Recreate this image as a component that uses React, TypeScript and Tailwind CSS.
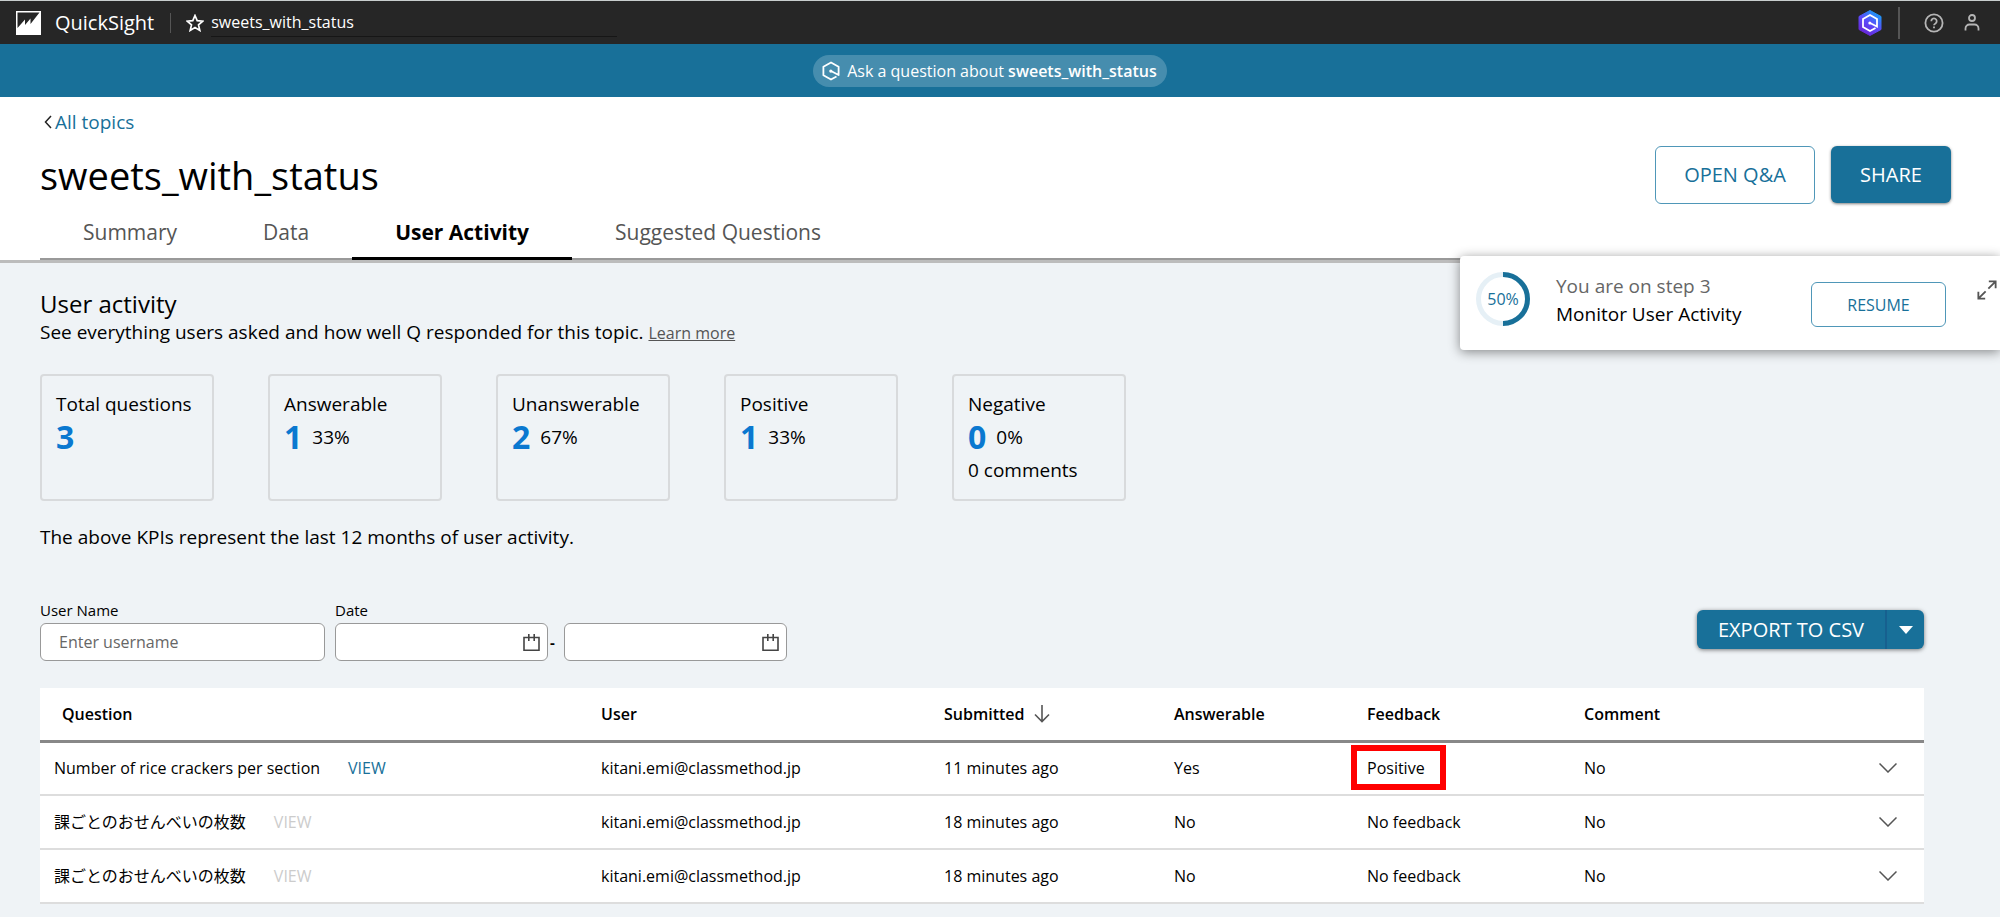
import React, { useState } from 'react';

const tabs = ['Summary', 'Data', 'User Activity', 'Suggested Questions'];

const kpis = [
  { label: 'Total questions', value: 3 },
  { label: 'Answerable', value: 1, percent: '33%' },
  { label: 'Unanswerable', value: 2, percent: '67%' },
  { label: 'Positive', value: 1, percent: '33%' },
  { label: 'Negative', value: 0, percent: '0%', note: '0 comments' },
];

const rows = [
  { question: 'Number of rice crackers per section', viewable: true, submitted: '11 minutes ago', answerable: 'Yes', feedback: 'Positive' },
  { question: '課ごとのおせんべいの枚数', viewable: false, submitted: '18 minutes ago', answerable: 'No', feedback: 'No feedback' },
  { question: '課ごとのおせんべいの枚数', viewable: false, submitted: '18 minutes ago', answerable: 'No', feedback: 'No feedback' },
];

const QMark = ({ className }: { className?: string }) => (
  <svg viewBox="0 0 20 20" className={className} fill="none" stroke="currentColor" strokeWidth="1.8">
    <path d="M10 10l7.6 4V5.8L10 1.5 2.4 5.8v8.4L10 18.5l5.5-3" strokeLinejoin="round" />
    <circle cx="9.8" cy="10.1" r="1.6" fill="currentColor" stroke="none" />
  </svg>
);

const CalendarIcon = () => (
  <svg viewBox="0 0 17 17" className="h-[17px] w-[17px] shrink-0" fill="none" stroke="#444" strokeWidth="1.6">
    <path d="M1 3.5h15v12.7H1z" />
    <path d="M5.8 0v7M11.2 0v7" />
  </svg>
);

const TopBar = () => (
  <header className="flex h-11 items-center border-t border-[#c8cdcd] bg-[#262626] pl-4 pr-5 text-white">
    <svg viewBox="0 0 25 24" className="h-6 w-[25px]">
      <path d="M0 0h25v24H0z" fill="#fff" />
      <path d="M1.5 1.5h22L14.5 13V7.5L9 14V8.5L1.5 17z" fill="#262626" />
    </svg>
    <span className="ml-3.5 text-xl">QuickSight</span>
    <span className="ml-4 h-5 w-px bg-[#555]" />
    <svg viewBox="0 0 18 18" className="ml-[15px] h-[18px] w-[18px]" fill="none" stroke="#fff" strokeWidth="1.7">
      <path d="M9 1.5l2.2 5.2 5.500.5-4.200 3.700 1.300 5.500L9 13.500l-4.800 2.900 1.300-5.500L1.300 7.200l5.500-.5z" />
    </svg>
    <span className="ml-[7px] w-[406px] border-b border-[#161616] text-base leading-7">sweets_with_status</span>
    <div className="ml-auto flex items-center">
      <button aria-label="Ask Q">
        <svg viewBox="0 0 24 26" className="h-[26px] w-6">
          <defs>
            <linearGradient id="q" x1="0.2" y1="1" x2="0.8" y2="0">
              <stop offset="0" stopColor="#6a1fd0" />
              <stop offset="0.5" stopColor="#5b4bfa" />
              <stop offset="1" stopColor="#12a5f5" />
            </linearGradient>
          </defs>
          <path d="M12 0.5l11 6v13l-11 6-11-6v-13z" fill="url(#q)" stroke="url(#q)" strokeLinejoin="round" />
          <path d="M12 13l7 3.5V9l-7-4-7 4v8l7 4 5.500-3" fill="none" stroke="#fff" strokeWidth="1.8" />
          <circle cx="11.8" cy="13" r="1.5" fill="#fff" />
        </svg>
      </button>
      <span className="ml-4 h-8 w-0.5 bg-[#555]" />
      <button aria-label="Help" className="ml-6">
        <svg viewBox="0 0 20 20" className="h-5 w-5" fill="none" stroke="#b5b5b5" strokeWidth="1.8">
          <circle cx="10" cy="10" r="8.6" />
          <path d="M7.3 8.200a2.700 2.700 0 1 1 4.200 2.200c-1 .6-1.500 1-1.500 1.900M10 13.500v1.700" />
        </svg>
      </button>
      <button aria-label="Account" className="ml-5">
        <svg viewBox="0 0 16 17" className="h-[17px] w-4" fill="none" stroke="#b5b5b5" strokeWidth="1.8">
          <circle cx="8" cy="4" r="3" />
          <path d="M1.500 16.500v-2a4 4 0 0 1 4-4h5a4 4 0 0 1 4 4v2" />
        </svg>
      </button>
    </div>
  </header>
);

const StepPanel = () => (
  <aside className="absolute right-0 top-64 z-10 flex h-[94px] w-[540px] items-start rounded-l bg-white pl-4 shadow-[0_2px_12px_rgba(0,0,0,0.45)]">
    <div className="relative mt-4 flex h-[54px] w-[54px] items-center justify-center">
      <svg viewBox="0 0 54 54" className="absolute inset-0" fill="none" strokeWidth="5">
        <circle cx="27" cy="27" r="24.5" stroke="#e6f0f6" />
        <path d="M27 2.500a24.500 24.500 0 0 1 0 49" stroke="#187099" />
      </svg>
      <span className="text-base text-[#187099]">50%</span>
    </div>
    <div className="ml-[26px] mt-4 text-[19px] leading-7">
      <p className="text-[#666]">You are on step 3</p>
      <p className="text-black">Monitor User Activity</p>
    </div>
    <button className="ml-auto mt-[26px] h-[45px] w-[135px] rounded-md border border-[#4f97b8] text-base text-[#187099]">RESUME</button>
    <button aria-label="Expand" className="ml-[31px] mr-[3px] mt-6">
      <svg viewBox="0 0 22 22" className="h-5 w-5" fill="none" stroke="#555" strokeWidth="2">
        <path d="M13 1.5h7.5V9M20 2l-7.5 7.5M9 20.5H1.5V13M2 20l7.5-7.5" />
      </svg>
    </button>
  </aside>
);

const App: React.FC = () => {
  const [activeTab, setActiveTab] = useState('User Activity');
  const [username, setUsername] = useState('');

  return (
    <div className="relative min-h-screen overflow-x-hidden bg-[#eff3f6] text-black" style={{ fontFamily: '"Open Sans", "Noto Sans CJK JP", sans-serif' }}>
      <TopBar />

      {/* Ask bar */}
      <div className="flex h-[53px] items-center justify-center bg-[#187099] pr-5">
        <button className="flex h-8 items-center rounded-full bg-[#468dae] pl-2 pr-2.5 text-base text-white">
          <QMark className="mr-1.5 h-5 w-5" />
          <span>Ask a question about <b className="font-semibold">sweets_with_status</b></span>
        </button>
      </div>

      {/* Topic header */}
      <div className="border-b-[3px] border-[#bcbcbc] bg-white pl-10">
        <div className="flex items-start justify-between pr-[49px]">
          <div>
            <a href="#" className="mt-[13px] flex items-center text-[19px] leading-6 text-[#187099]">
              <svg viewBox="0 0 8 14" className="ml-1 mr-[3px] h-3.5 w-2" fill="none" stroke="#222" strokeWidth="1.5">
                <path d="M7 1L1.5 7 7 13" />
              </svg>
              All topics
            </a>
            <h1 className="mt-[17px] text-[38px] leading-[48px]">sweets_with_status</h1>
          </div>
          <div className="mt-[49px] flex gap-4 text-xl">
            <button className="h-[58px] w-40 rounded-md border border-[#4f97b8] text-[#187099]">OPEN Q&amp;A</button>
            <button className="h-[57px] w-[120px] rounded-md bg-[#187099] text-white shadow-[0_1px_3px_rgba(0,0,0,0.5)]">SHARE</button>
          </div>
        </div>
        <nav className="flex h-14 border-b-2 border-[#999] text-[21px]">
          {tabs.map((tab) => (
            <button
              key={tab}
              onClick={() => setActiveTab(tab)}
              className={tab === activeTab ? '-mb-0.5 border-b-[3px] border-black px-[43px] pt-1 font-bold' : 'px-[43px] pt-[3px] text-[#555]'}
            >
              {tab}
            </button>
          ))}
        </nav>
      </div>

      <StepPanel />

      <main className="pl-10 pr-[76px] pt-[27px]">
        <h2 className="text-2xl leading-7">User activity</h2>
        <p className="text-[19px] leading-7">
          See everything users asked and how well Q responded for this topic.{' '}
          <a href="#" className="text-base text-[#555] underline">Learn more</a>
        </p>

        {/* KPI cards */}
        <div className="mt-7 flex gap-[54px]">
          {kpis.map((kpi) => (
            <div key={kpi.label} className="h-[127px] w-[174px] rounded border-2 border-[#d8dadc] px-3.5 pt-4 text-[19px] leading-6">
              <p>{kpi.label}</p>
              <div className="flex items-center gap-2.5">
                <span className="text-[32px] font-bold leading-[42px] text-[#0a78d0]">{kpi.value}</span>
                <span>{kpi.percent}</span>
              </div>
              {kpi.note && <p>{kpi.note}</p>}
            </div>
          ))}
        </div>
        <p className="mt-5 text-[19px] leading-8">The above KPIs represent the last 12 months of user activity.</p>

        {/* Filters */}
        <div className="mt-11 flex items-start text-[15px]">
          <div>
            <label htmlFor="username" className="block leading-[26px]">User Name</label>
            <input
              id="username"
              value={username}
              onChange={(e) => setUsername(e.target.value)}
              placeholder="Enter username"
              className="h-[38px] w-[285px] rounded-md border border-[#999] bg-white px-[18px] text-base placeholder:text-[#666]"
            />
          </div>
          <div className="ml-2.5">
            <label htmlFor="from" className="block leading-[26px]">Date</label>
            <div className="flex items-center">
              <div className="flex h-[38px] w-[213px] items-center rounded-md border border-[#999] bg-white pr-[7px]">
                <input id="from" className="w-full min-w-0 px-4" />
                <CalendarIcon />
              </div>
              <span className="w-4 pl-0.5 font-bold">-</span>
              <div className="flex h-[38px] w-[223px] items-center rounded-md border border-[#999] bg-white pr-[7px]">
                <input id="to" aria-label="End date" className="w-full min-w-0 px-4" />
                <CalendarIcon />
              </div>
            </div>
          </div>
          <div className="ml-auto mt-[13px] flex h-[39px] rounded-md bg-[#187099] text-xl text-white shadow-[0_1px_4px_rgba(0,0,0,0.5)]">
            <button className="w-[190px] border-r-2 border-[#17608f]">EXPORT TO CSV</button>
            <button aria-label="Export options" className="flex w-[37px] items-center justify-center">
              <svg viewBox="0 0 14 8" className="h-2 w-3.5" fill="#fff">
                <path d="M0 0h14L7 8z" />
              </svg>
            </button>
          </div>
        </div>

        {/* Activity log */}
        <table className="mb-3 mt-[27px] w-full table-fixed bg-white text-left text-base">
          <thead>
            <tr className="h-[53px] border-b-[3px] border-[#888] *:font-semibold">
              <th className="w-[561px] pl-[22px]">Question</th>
              <th className="w-[343px]">User</th>
              <th className="w-[230px]">
                <span className="flex items-center gap-2.5">
                  Submitted
                  <svg viewBox="0 0 16 18" className="h-[18px] w-4" fill="none" stroke="#555" strokeWidth="1.6">
                    <path d="M8 0v16.500M1 9.500l7 7 7-7" />
                  </svg>
                </span>
              </th>
              <th className="w-[193px]">Answerable</th>
              <th className="w-[217px]">Feedback</th>
              <th>Comment</th>
              <th className="w-[52px]" aria-label="Details" />
            </tr>
          </thead>
          <tbody>
            {rows.map((row, i) => (
              <tr key={i} className="h-[54px] border-b-2 border-[#ddd]">
                <td className="pl-3.5">
                  {row.question}
                  <button
                    disabled={!row.viewable}
                    className={row.viewable ? 'ml-7 text-[#187099]' : 'ml-7 text-[#ccc]'}
                  >
                    VIEW
                  </button>
                </td>
                <td>kitani.emi@classmethod.jp</td>
                <td>{row.submitted}</td>
                <td>{row.answerable}</td>
                <td>
                  <span className="relative">
                    {row.feedback}
                    {row.feedback === 'Positive' && (
                      <span className="absolute -left-4 -top-3 h-[45px] w-[95px] border-[6px] border-[#ff0000]" />
                    )}
                  </span>
                </td>
                <td>No</td>
                <td>
                  <button aria-label="Expand row" className="ml-[7px] block">
                    <svg viewBox="0 0 18 10" className="h-2.5 w-[18px]" fill="none" stroke="#555" strokeWidth="1.5">
                      <path d="M0.5 0.5L9 9l8.5-8.5" />
                    </svg>
                  </button>
                </td>
              </tr>
            ))}
          </tbody>
        </table>
      </main>
    </div>
  );
};

export default App;
